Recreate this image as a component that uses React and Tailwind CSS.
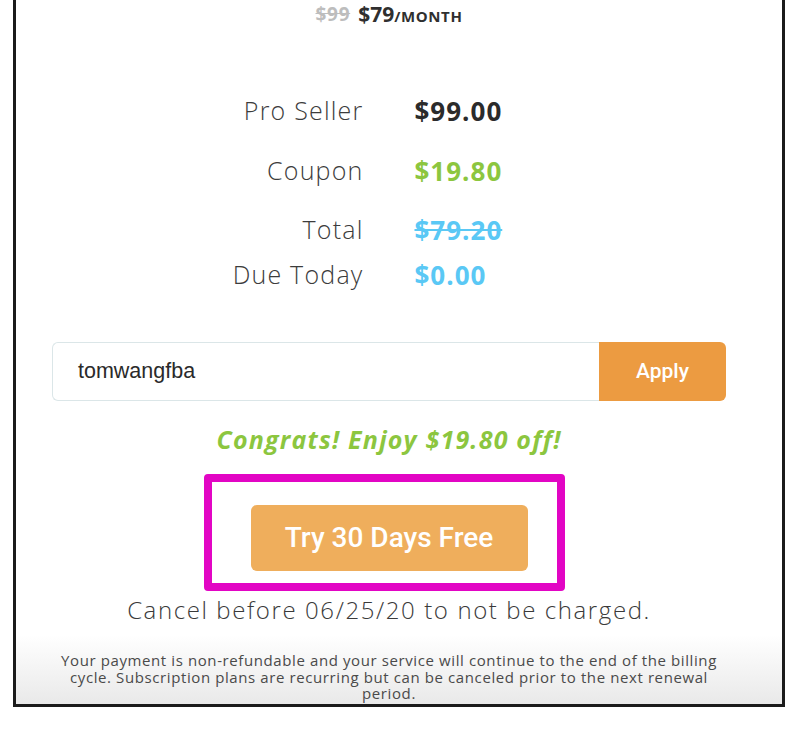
export default function App() {
  const mont = { fontFamily: '"Open Sans", "DejaVu Sans", sans-serif' };
  return (
    <div className="w-[804px] h-[732px] bg-white relative overflow-hidden">
      <div className="ml-[13px] w-[772px] h-[707px] border-x-[3px] border-b-[3px] border-[#1b1b1b] flex flex-col bg-white">
        <div className="pl-[36px] pr-[56px] flex flex-col">
          {/* header price */}
          <div className="pt-[2px] h-[26px] leading-none flex items-center justify-center gap-[8px] font-bold" style={mont}>
            <span className="text-[19px] tracking-[0.7px] text-[#bdbdbd] line-through">$99</span>
            <span className="text-[21px] text-[#2f2f2f] flex items-baseline">
              $79<span className="text-[15px] tracking-[0.6px] uppercase">/Month</span>
            </span>
          </div>

          {/* summary rows */}
          <div className="mt-[55px] grid grid-cols-2 gap-x-[51px]" style={mont}>
            <div className="h-[60px] flex items-center justify-end text-[25px] tracking-[1.2px] font-light text-[#3c3c3c]">Pro Seller</div>
            <div className="h-[60px] flex items-center text-[26px] tracking-[1px] font-bold text-[#2b2b2b]">$99.00</div>
            <div className="h-[60px] flex items-center justify-end text-[25px] tracking-[1.2px] font-light text-[#3c3c3c]">Coupon</div>
            <div className="h-[60px] flex items-center text-[26px] tracking-[1px] font-bold text-[#8cc63f]">$19.80</div>
            <div className="h-[58px] flex items-center justify-end text-[25px] tracking-[1.2px] font-light text-[#3c3c3c]">Total</div>
            <div className="h-[58px] flex items-center text-[26px] tracking-[1px] font-bold text-[#5ac8f5] line-through">$79.20</div>
            <div className="h-[32px] flex items-center justify-end text-[25px] tracking-[1.2px] font-light text-[#3c3c3c]">Due Today</div>
            <div className="h-[32px] flex items-center text-[26px] tracking-[1px] font-bold text-[#5ac8f5]">$0.00</div>
          </div>

          {/* coupon input */}
          <div className="mt-[51px] h-[59px] flex">
            <div
              className="flex-1 flex items-center pl-[25px] border border-r-0 border-[#dbe6e8] rounded-l-[6px] text-[21.5px] text-[#2a2a2a]"
              style={{ fontFamily: '"Liberation Sans", Arial, sans-serif' }}
            >
              tomwangfba
            </div>
            <div
              className="w-[127px] flex items-center justify-center bg-[#ec9b41] rounded-r-[6px] text-white text-[21px] font-medium"
              style={{ fontFamily: 'Roboto, "Liberation Sans", sans-serif' }}
            >
              Apply
            </div>
          </div>

          {/* congrats */}
          <div
            className="mt-[24px] h-[30px] flex items-center justify-center text-[25px] tracking-[1.2px] font-bold italic text-[#8cc63f]"
            style={mont}
          >
            Congrats! Enjoy $19.80 off!
          </div>

          {/* try button */}
          <div className="mt-[50px] flex justify-center">
            <div className="relative">
              <div className="w-[277px] h-[66px] rounded-[6px] bg-[#efae5c] flex items-center justify-center text-white text-[28px] font-medium"
                style={{ fontFamily: 'Roboto, "Liberation Sans", sans-serif' }}>
                Try 30 Days Free
              </div>
              <div className="absolute left-[-47px] top-[-31px] w-[361px] h-[117px] border-[8px] border-[#e205c4] rounded-[4px] pointer-events-none" />
            </div>
          </div>

          {/* cancel text */}
          <div
            className="mt-[25px] h-[28px] flex items-center justify-center text-[24px] tracking-[1.6px] font-light text-[#3a3a3a] whitespace-nowrap"
            style={mont}
          >
            Cancel before 06/25/20 to not be charged.
          </div>
        </div>

        {/* disclaimer */}
        <div className="mt-[11px] flex-1 bg-gradient-to-b from-white to-[#e9e9e9] pl-[36px] pr-[56px] pt-[17px] flex justify-center">
          <p
            className="w-[664px] text-center text-[15px] leading-[16.5px] tracking-[0.6px] text-[#4a4a4a]"
            style={mont}
          >
            Your payment is non-refundable and your service will continue to the end of the billing cycle. Subscription plans are recurring but can be canceled prior to the next renewal period.
          </p>
        </div>
      </div>
    </div>
  );
}
